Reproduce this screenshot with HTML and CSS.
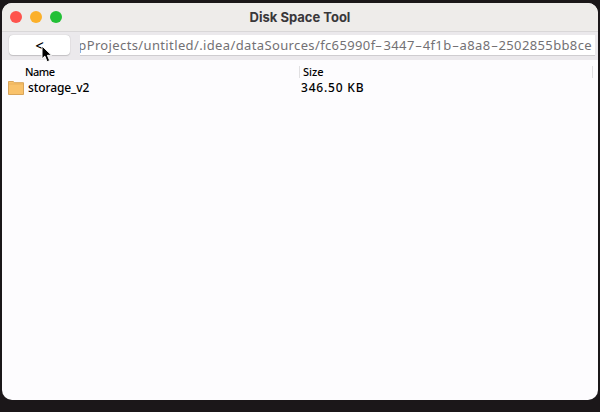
FILE: index.html
```
<!DOCTYPE html>
<html lang="en">
<head>
<meta charset="utf-8">
<title>Disk Space Tool</title>
<link rel="stylesheet" href="styles.css">
</head>
<body>
<main class="window">
  <header class="titlebar">
    <div class="lights"><i class="light close"></i><i class="light minimize"></i><i class="light expand"></i></div>
    <h1 class="title">Disk Space Tool</h1>
  </header>
  <div class="toolbar">
    <button class="back"><span class="chevron">&lt;</span></button>
    <div class="path"><span class="path-text">pProjects/untitled/.idea/dataSources/fc65990f<span class="dash">-</span>3447<span class="dash">-</span>4f1b<span class="dash">-</span>a8a8<span class="dash">-</span>2502855bb8ce</span></div>
  </div>
  <div class="row head">
    <div class="name"><span class="name-label">Name</span></div>
    <div class="size"><span class="size-label">Size</span></div>
  </div>
  <div class="row item">
    <div class="name">
      <svg class="folder" width="16" height="14" viewBox="0 0 16 14"><path d="M.5 .5h4.7l1.5 1.2h8.8v11.8H.5z" fill="#f9c26b" stroke="#d9a55a"/><path d="M1 3h14" stroke="#e5ac58" stroke-width=".7"/></svg>
      <span class="file">storage_v2</span>
    </div>
    <div class="size"><span class="bytes">346.50 KB</span></div>
  </div>
</main>
<svg class="cursor" width="12" height="18" viewBox="0 0 12 18"><path d="M1 1v12.8l2.8-2.7 2.3 5.6 2.6-1.1-2.3-5.3h4.2z" fill="#000" stroke="#fff" stroke-width="1"/></svg>
</body>
</html>
```
FILE: styles.css
```
* { box-sizing: border-box; }
body {
  margin: 0;
  height: 412px;
  padding: 3px 2px 12px;
  overflow: hidden;
  background: #1b1719;
  color: #000;
  font-family: "Noto Sans", "Open Sans", sans-serif;
}
.window {
  height: 397px;
  border-radius: 10px;
  overflow: hidden;
  background: #fdfcfe;
}
.titlebar {
  height: 29px;
  display: grid;
  grid-template-columns: 70px 1fr 70px;
  align-items: center;
  background: #eeecea;
  border-bottom: 1px solid #d9d7d8;
}
.lights { display: flex; gap: 8px; padding-left: 8px; }
.light { width: 12px; height: 12px; border-radius: 50%; }
.close { background: #fe534d; }
.minimize { background: #fbb02a; }
.expand { background: #22c036; }
.title {
  margin: 0;
  text-align: center;
  font: 700 13px/26px Inter, sans-serif;
  letter-spacing: 0;
  color: #39373a;
}
.toolbar {
  height: 28px;
  display: flex;
  align-items: flex-start;
  padding: 3px 3px 0 7px;
  background: #ebe9ec;
}
.back {
  width: 61px;
  height: 20px;
  padding: 0;
  margin-right: 10px;
  border: 0;
  border-radius: 4px;
  background: #fff;
  box-shadow: 0 0 1px #aaa, 0 1px 1px #c5c3c6;
  font: 500 15px/19px "Noto Sans", sans-serif;
}
.chevron { display: block; }
.path {
  flex: 1;
  height: 21px;
  overflow: hidden;
  display: flex;
  justify-content: flex-end;
  padding-right: 3px;
  background: #fff;
  border-bottom: 1px solid #cfcdd0;
}
.path-text {
  font-size: 13px;
  line-height: 20px;
  letter-spacing: 0.37px;
  white-space: nowrap;
  color: #737174;
}
.dash {
  display: inline-block;
  width: 8px;
  text-align: center;
  transform: scaleX(1.7);
}
.row { display: grid; grid-template-columns: 297px 294px 1fr; }
.head {
  height: 20px;
  padding-top: 6px;
  font-size: 11px;
  line-height: 12px;
  font-weight: 500;
}
.head .name { padding-left: 23px; letter-spacing: -0.5px; }
.head .size {
  height: 12px;
  padding-left: 3px;
  border: solid #e1e0e2;
  border-width: 0 1px;
}
.item {
  height: 17px;
  font-size: 12px;
  line-height: 16px;
  font-weight: 500;
}
.item .name { display: flex; align-items: center; height: 16px; padding-left: 6px; gap: 4px; }
.item .size { padding-left: 2px; }
.file { letter-spacing: -0.1px; }
.bytes { letter-spacing: 0.8px; }
.cursor { position: absolute; left: 41px; top: 45px; }
```
